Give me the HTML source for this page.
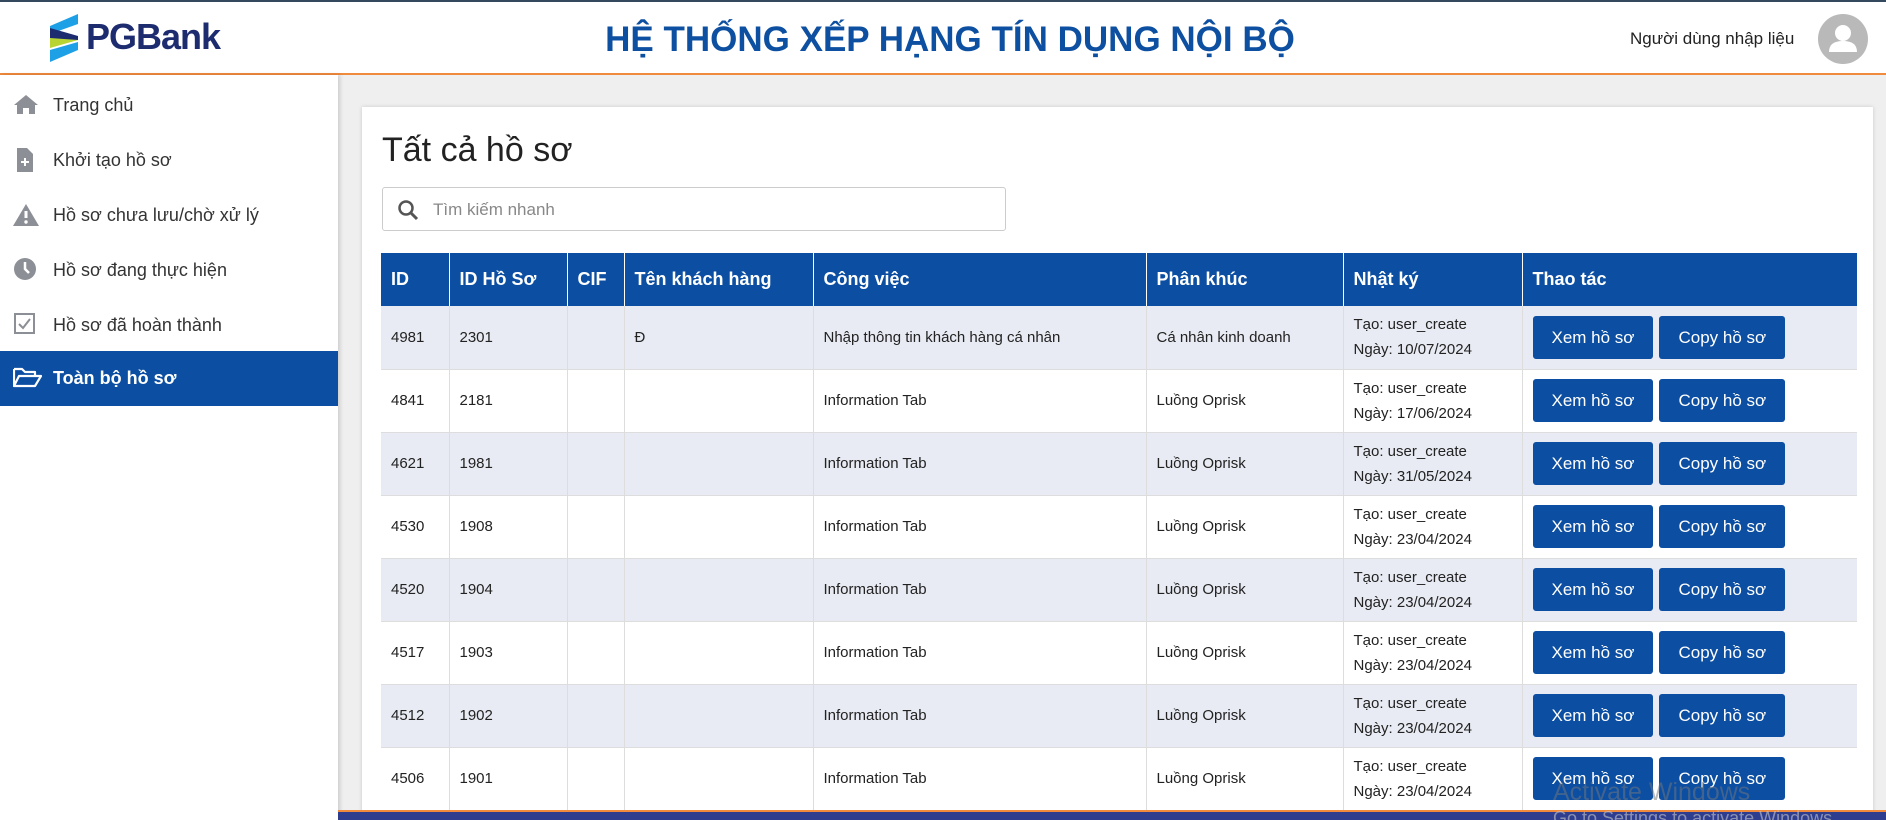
<!DOCTYPE html>
<html><head><meta charset="utf-8"><style>
*{box-sizing:border-box;margin:0;padding:0}
html,body{width:1886px;height:820px;overflow:hidden}
body{background:#efefef;font-family:"Liberation Sans","DejaVu Sans",sans-serif;position:relative}
.top{position:absolute;left:0;top:0;width:1886px;height:75px;background:#fff;border-top:2px solid #34495e;border-bottom:2px solid #f08a3c}
.logo{position:absolute;left:50px;top:12px}
.brand{position:absolute;left:86px;top:14px;font-size:36px;font-weight:bold;color:#1d2b6f;letter-spacing:-1px}
.title{position:absolute;left:0;width:1900px;text-align:center;top:18px;font-size:35px;font-weight:bold;color:#0d4fa0}
.user{position:absolute;left:1630px;top:27px;font-size:17px;color:#222}
.av{position:absolute;left:1818px;top:12px;width:50px;height:50px;border-radius:50%;background:#b9b9b9;overflow:hidden}
.side{position:absolute;left:0;top:75px;width:338px;height:745px;background:#fff;box-shadow:2px 0 4px rgba(0,0,0,.15)}
.it{position:absolute;left:0;width:338px;height:55px;font-size:18px;color:#333;line-height:55px;padding-left:53px}
.it svg{position:absolute;left:13px;top:15px}
.it.act{background:#0b4ea2;color:#fff;font-weight:bold}
.card{position:absolute;left:362px;top:107px;width:1511px;height:713px;background:#fff;box-shadow:0 0 4px rgba(0,0,0,.15)}
h1{position:absolute;left:20px;top:24px;font-size:34px;font-weight:normal;color:#222}
.search{position:absolute;left:20px;top:80px;width:624px;height:44px;border:1px solid #ccc;border-radius:3px}
.search span{position:absolute;left:50px;top:12px;font-size:17px;color:#888}
table{position:absolute;left:19px;top:146px;width:1476px;border-collapse:collapse;font-size:15px;color:#222}
th{background:#0b4ea2;color:#fff;text-align:left;height:53px;font-size:18px;padding-left:10px;border-left:1px solid #fff}
td{height:63px;padding-left:10px;border-left:1px solid #ddd;border-bottom:1px solid #ddd;line-height:25px}
tr:nth-child(even) td{background:#e8ebf3}
.b{display:inline-block;background:#0b4ea2;color:#fff;font-size:17px;height:43px;line-height:43px;border-radius:3px;padding:0 19px;margin-right:6px}
.bot{position:absolute;left:338px;top:810px;width:1548px;height:10px;background:#2f3d8f;border-top:2px solid #f08a3c}
.wm{position:absolute;left:1553px;top:778px;font-size:25px;color:rgba(120,120,120,.5)}
.wm2{position:absolute;left:1553px;top:808px;font-size:18px;color:rgba(200,200,200,.6)}
</style></head><body>
<div class="top">
<svg class="logo" width="32" height="48" viewBox="0 0 32 48"><path d="M0 12 L28 0 L28 10 L0 20Z" fill="#1ea0e6"/><path d="M0 14 L28 22 L28 26 L0 28Z" fill="#1d2b6f"/><path d="M0 24 L28 26 L0 34Z" fill="#b7d433"/><path d="M0 36 L28 28 L28 36 L0 48Z" fill="#1ea0e6"/></svg>
<div class="brand">PGBank</div>
<div class="title">HỆ THỐNG XẾP HẠNG TÍN DỤNG NỘI BỘ</div>
<div class="user">Người dùng nhập liệu</div>
<div class="av"><svg width="50" height="50"><circle cx="25" cy="19" r="8" fill="#fff"/><path d="M11 38 Q11 27 25 27 Q39 27 39 38Z" fill="#fff"/></svg></div>
</div>
<div class="side">
<div class="it" style="top:3px"><svg width="26" height="22"><path d="M13 2 L1 12 L4 12 L4 21 L10 21 L10 15 L16 15 L16 21 L22 21 L22 12 L25 12Z" fill="#8c8f96"/></svg>Trang chủ</div>
<div class="it" style="top:58px"><svg width="26" height="24"><path d="M4 0 H14 L20 6 V24 H4Z" fill="#8c8f96"/><path d="M12 10 V18 M8 14 H16" stroke="#fff" stroke-width="2"/></svg>Khởi tạo hồ sơ</div>
<div class="it" style="top:113px"><svg width="28" height="24"><path d="M13 1 L26 23 H0Z" fill="#8c8f96"/><path d="M13 8 V15" stroke="#fff" stroke-width="3"/><circle cx="13" cy="19" r="1.7" fill="#fff"/></svg>Hồ sơ chưa lưu/chờ xử lý</div>
<div class="it" style="top:168px"><svg width="26" height="24"><circle cx="12" cy="11" r="11" fill="#8c8f96"/><path d="M12 4 V11 L16 15" stroke="#fff" stroke-width="2.5" fill="none"/></svg>Hồ sơ đang thực hiện</div>
<div class="it" style="top:223px"><svg width="26" height="24"><rect x="2" y="1" width="19" height="19" fill="none" stroke="#8c8f96" stroke-width="2"/><path d="M6 11 L10 15 L17 6" stroke="#8c8f96" stroke-width="2" fill="none"/></svg>Hồ sơ đã hoàn thành</div>
<div class="it act" style="top:276px"><svg width="30" height="24"><path d="M1 3 H9 L12 6 H22 V10 M1 3 V20 L6 10 H28 L22 20 H1" stroke="#fff" stroke-width="2.2" fill="none" stroke-linejoin="round"/></svg>Toàn bộ hồ sơ</div>
</div>
<div class="card">
<h1>Tất cả hồ sơ</h1>
<div class="search"><svg style="position:absolute;left:14px;top:11px" width="22" height="22"><circle cx="9" cy="9" r="6.5" stroke="#555" stroke-width="2.5" fill="none"/><path d="M14 14 L20 20" stroke="#555" stroke-width="3"/></svg><span>Tìm kiếm nhanh</span></div>
<table>
<tr><th style="width:68px;border-left:none">ID</th><th style="width:118px">ID Hồ Sơ</th><th style="width:57px">CIF</th><th style="width:189px">Tên khách hàng</th><th style="width:333px">Công việc</th><th style="width:197px">Phân khúc</th><th style="width:179px">Nhật ký</th><th>Thao tác</th></tr>
<tr><td style="border-left:none">4981</td><td>2301</td><td></td><td>Đ</td><td>Nhập thông tin khách hàng cá nhân</td><td>Cá nhân kinh doanh</td><td>Tạo: user_create<br>Ngày: 10/07/2024</td><td><span class="b">Xem hồ sơ</span><span class="b">Copy hồ sơ</span></td></tr>
<tr><td style="border-left:none">4841</td><td>2181</td><td></td><td></td><td>Information Tab</td><td>Luồng Oprisk</td><td>Tạo: user_create<br>Ngày: 17/06/2024</td><td><span class="b">Xem hồ sơ</span><span class="b">Copy hồ sơ</span></td></tr>
<tr><td style="border-left:none">4621</td><td>1981</td><td></td><td></td><td>Information Tab</td><td>Luồng Oprisk</td><td>Tạo: user_create<br>Ngày: 31/05/2024</td><td><span class="b">Xem hồ sơ</span><span class="b">Copy hồ sơ</span></td></tr>
<tr><td style="border-left:none">4530</td><td>1908</td><td></td><td></td><td>Information Tab</td><td>Luồng Oprisk</td><td>Tạo: user_create<br>Ngày: 23/04/2024</td><td><span class="b">Xem hồ sơ</span><span class="b">Copy hồ sơ</span></td></tr>
<tr><td style="border-left:none">4520</td><td>1904</td><td></td><td></td><td>Information Tab</td><td>Luồng Oprisk</td><td>Tạo: user_create<br>Ngày: 23/04/2024</td><td><span class="b">Xem hồ sơ</span><span class="b">Copy hồ sơ</span></td></tr>
<tr><td style="border-left:none">4517</td><td>1903</td><td></td><td></td><td>Information Tab</td><td>Luồng Oprisk</td><td>Tạo: user_create<br>Ngày: 23/04/2024</td><td><span class="b">Xem hồ sơ</span><span class="b">Copy hồ sơ</span></td></tr>
<tr><td style="border-left:none">4512</td><td>1902</td><td></td><td></td><td>Information Tab</td><td>Luồng Oprisk</td><td>Tạo: user_create<br>Ngày: 23/04/2024</td><td><span class="b">Xem hồ sơ</span><span class="b">Copy hồ sơ</span></td></tr>
<tr><td style="border-left:none">4506</td><td>1901</td><td></td><td></td><td>Information Tab</td><td>Luồng Oprisk</td><td>Tạo: user_create<br>Ngày: 23/04/2024</td><td><span class="b">Xem hồ sơ</span><span class="b">Copy hồ sơ</span></td></tr>
</table>
</div>
<div class="bot"></div>
<div class="wm">Activate Windows</div>
<div class="wm2">Go to Settings to activate Windows.</div>
</body></html>
